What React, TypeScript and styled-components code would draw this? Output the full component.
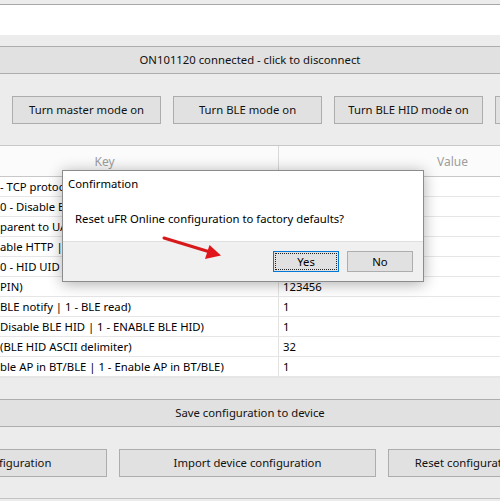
import React from "react";
import styled, { createGlobalStyle } from "styled-components";

const GlobalStyle = createGlobalStyle`
  html, body {
    margin: 0;
    padding: 0;
    background: #ececec;
  }
  body {
    font-family: "Noto Sans", "Open Sans", sans-serif;
    font-size: 11.3px;
    color: #000;
  }
`;

const Window = styled.div`
  position: relative;
  width: 500px;
  height: 501px;
  overflow: hidden;
  background: #ececec;
  display: flex;
  flex-direction: column;
`;

const TopField = styled.div`
  margin-top: 4px;
  height: 30px;
  background: #fff;
  border-top: 1px solid #a8a8a8;
`;

const WinButton = styled.div<{ width?: number }>`
  flex: 0 0 auto;
  box-sizing: border-box;
  width: ${({ width }) => (width ? `${width}px` : "auto")};
  height: 28px;
  padding-bottom: 1px;
  background: #e1e1e1;
  border: 1px solid #adadad;
  display: flex;
  align-items: center;
  justify-content: center;
  white-space: nowrap;
  overflow: hidden;
  color: #111;
`;

const WideButton = styled(WinButton)`
  margin: 0 -2px;
`;

const ConnectRow = styled.div`
  margin-top: 11px;
  display: flex;
  flex-direction: column;
`;

const ButtonRow = styled.div<{ offset: number; top: number }>`
  margin-top: ${({ top }) => top}px;
  margin-left: ${({ offset }) => offset}px;
  display: flex;
  gap: 12px;
`;

const Table = styled.div`
  margin-top: 21px;
  display: grid;
  grid-template-columns: 279px 348px;
  background: #fff;
  border-top: 1px solid #c8c8c8;
  border-bottom: 1px solid #e6e6e6;
`;

const HeadCell = styled.div<{ shift?: number }>`
  height: 30px;
  display: flex;
  align-items: center;
  justify-content: center;
  padding-right: ${({ shift }) => shift ?? 0}px;
  background: #fbfbfb;
  color: #9d9d9d;
  font-size: 12px;
  border-right: 1px solid #d9d9d9;
  border-bottom: 1px solid #c8c8c8;
`;

const Cell = styled.div<{ indent: number }>`
  height: 19px;
  display: flex;
  align-items: center;
  padding-left: ${({ indent }) => indent}px;
  white-space: nowrap;
  overflow: hidden;
  border-right: 1px solid #e3e3e3;
  border-bottom: 1px solid #e6e6e6;
`;

const SaveRow = styled.div`
  margin-top: 21px;
  display: flex;
  flex-direction: column;
`;

const BottomEdge = styled.div`
  margin-top: 21px;
  border-bottom: 1px solid #c4c4c4;
`;

const Dialog = styled.div`
  position: absolute;
  left: 62px;
  top: 170px;
  width: 362px;
  box-sizing: border-box;
  background: #fff;
  border: 1px solid #8c8c8c;
  box-shadow: 0 2px 14px rgba(0, 0, 0, 0.32);
  display: flex;
  flex-direction: column;
`;

const DialogTitle = styled.div`
  height: 24px;
  padding-left: 5px;
  display: flex;
  align-items: center;
`;

const DialogMessage = styled.div`
  height: 46px;
  padding-left: 12px;
  display: flex;
  align-items: center;
`;

const DialogFooter = styled.div`
  height: 40px;
  box-sizing: border-box;
  background: #f0f0f0;
  border-top: 1px solid #dfdfdf;
  display: flex;
  justify-content: flex-end;
  align-items: flex-start;
  padding: 9px 10px 0 0;
  gap: 8px;
`;

const DialogButton = styled.div<{ focused?: boolean }>`
  box-sizing: border-box;
  width: 66px;
  height: 21px;
  display: flex;
  align-items: center;
  justify-content: center;
  background: #e1e1e1;
  border: 1px solid ${({ focused }) => (focused ? "#0078d7" : "#adadad")};
  outline: ${({ focused }) => (focused ? "1px dotted #222" : "none")};
  outline-offset: -3px;
`;

const Arrow = styled.svg`
  position: absolute;
  left: 160px;
  top: 232px;
`;

const rows: [string, string][] = [
  ["- TCP protocol | 1 - UDP protocol)", "0"],
  ["0 - Disable BLE | 1 - Enable BLE)", "1"],
  ["parent to UART | 1 - Transparent)", "0"],
  ["able HTTP | 1 - Enable HTTP)", "1"],
  ["0 - HID UID | 1 - HID UID + delimiter)", "0"],
  ["PIN)", "123456"],
  ["BLE notify | 1 - BLE read)", "1"],
  [" Disable BLE HID | 1 - ENABLE BLE HID)", "1"],
  ["(BLE HID ASCII delimiter)", "32"],
  ["ble AP in BT/BLE | 1 - Enable AP in BT/BLE)", "1"],
];

const App = () => {
  return (
    <>
      <GlobalStyle />
      <Window>
        <TopField />
        <ConnectRow>
          <WideButton>ON101120 connected - click to disconnect</WideButton>
        </ConnectRow>
        <ButtonRow offset={12} top={22}>
          <WinButton width={149}>Turn master mode on</WinButton>
          <WinButton width={149}>Turn BLE mode on</WinButton>
          <WinButton width={149}>Turn BLE HID mode on</WinButton>
          <WinButton width={149}>Turn AP mode on</WinButton>
        </ButtonRow>
        <Table>
          <HeadCell shift={69}>Key</HeadCell>
          <HeadCell>Value</HeadCell>
          {rows.map(([key, value], i) => (
            <React.Fragment key={i}>
              <Cell indent={0}>{key}</Cell>
              <Cell indent={4}>{value}</Cell>
            </React.Fragment>
          ))}
        </Table>
        <SaveRow>
          <WideButton>Save configuration to device</WideButton>
        </SaveRow>
        <ButtonRow offset={-150} top={22}>
          <WinButton width={257}>Export device configuration</WinButton>
          <WinButton width={257}>Import device configuration</WinButton>
          <WinButton width={257}>Reset configuration to factory defaults</WinButton>
        </ButtonRow>
        <BottomEdge />

        <Dialog>
          <DialogTitle>Confirmation</DialogTitle>
          <DialogMessage>
            Reset uFR Online configuration to factory defaults?
          </DialogMessage>
          <DialogFooter>
            <DialogButton focused>Yes</DialogButton>
            <DialogButton>No</DialogButton>
          </DialogFooter>
        </Dialog>

        <Arrow width="66" height="30" viewBox="0 0 66 30">
          <line x1="4" y1="6" x2="50" y2="20" stroke="#d7191c" strokeWidth="3" strokeLinecap="round" />
          <polygon points="61,23.5 45,27 49.5,13" fill="#e0161a" />
        </Arrow>
      </Window>
    </>
  );
};

export default App;
